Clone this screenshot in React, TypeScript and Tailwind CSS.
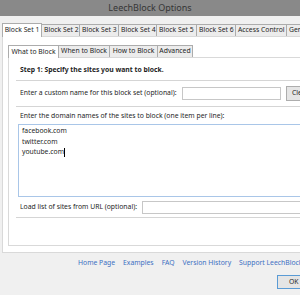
import React from "react";

const outerTabs: [string, string][] = [
  ["Block Set 1", "w-[40px]"],
  ["Block Set 2", "w-[38px]"],
  ["Block Set 3", "w-[39px]"],
  ["Block Set 4", "w-[38px]"],
  ["Block Set 5", "w-[40px]"],
  ["Block Set 6", "w-[39px]"],
  ["Access Control", "w-[51px]"],
  ["General", "w-[34px]"],
];
const innerTabs: [string, string][] = [
  ["What to Block", "w-[51px]"],
  ["When to Block", "w-[51px]"],
  ["How to Block", "w-[48px]"],
  ["Advanced", "w-[35px]"],
];

export default function App() {
  return (
    <div className="w-[300px] h-[295px] overflow-hidden bg-[#f0f0f0] font-['Noto_Sans',sans-serif] text-[6.8px] text-[#1e1e1e]">
      <div className="h-[16px] bg-[#898989] flex items-center justify-center text-[9px] text-[#363636]">
        LeechBlock Options
      </div>
      <div className="pl-[2px] pt-[6px] w-[380px]">
        <div className="flex items-end h-[14px]">
          {outerTabs.map(([t, w], i) =>
            i === 0 ? (
              <div key={t} className={`${w} h-[14px] bg-white border border-b-0 border-[#acacac] flex items-center justify-center leading-none whitespace-nowrap relative z-10 -mb-px`}>
                {t}
              </div>
            ) : (
              <div key={t} className={`${w} shrink-0 h-[12px] pl-[2px] bg-[#ececec] border border-l-0 border-b-0 border-[#acacac] flex items-center leading-none whitespace-nowrap`}>
                {t}
              </div>
            )
          )}
        </div>
        <div className="bg-white border border-[#d9d9d9] h-[217px] pl-[5px] pt-[7px]">
          <div className="flex items-end h-[13px]">
            {innerTabs.map(([t, w], i) =>
              i === 0 ? (
                <div key={t} className={`${w} h-[13px] bg-white border border-b-0 border-[#acacac] flex items-center justify-center leading-none whitespace-nowrap relative z-10 -mb-px`}>
                  {t}
                </div>
              ) : (
                <div key={t} className={`${w} h-[12px] bg-[#ececec] border border-l-0 border-b-0 border-[#acacac] flex items-center justify-center leading-none whitespace-nowrap`}>
                  {t}
                </div>
              )
            )}
          </div>
          <div className="bg-white border border-[#d9d9d9] h-[189px] pl-[7px] pt-[7px]">
            <div className="pl-[4px] h-[10px] leading-[10px] font-bold">Step 1: Specify the sites you want to block.</div>
            <div className="mt-[5px] h-px bg-[#d5d5d5]" />
            <div className="mt-[6px] h-[13px] flex items-center">
              <div className="w-[166px] pl-[4px] whitespace-nowrap">Enter a custom name for this block set (optional):</div>
              <div className="w-[99px] h-[13px] border border-[#c7c7c7] bg-white" />
              <div className="ml-[5px] h-[15px] px-[5px] border border-[#adadad] bg-[#e5e5e5] flex items-center">Clear</div>
            </div>
            <div className="mt-[6px] h-px bg-[#d5d5d5]" />
            <div className="mt-[4px] pl-[4px] h-[10px] leading-[10px] whitespace-nowrap">
              Enter the domain names of the sites to block (one item per line):
            </div>
            <div className="mt-[3px] ml-[2px] h-[73px] border border-[#a9c6e8] pl-[3px] pt-[1px] leading-[10.5px]">
              <div>facebook.com</div>
              <div>twitter.com</div>
              <div className="flex items-center">
                youtube.com<span className="inline-block w-px h-[9px] bg-black" />
              </div>
            </div>
            <div className="mt-[4px] h-[13px] flex items-center">
              <div className="w-[126px] pl-[4px] whitespace-nowrap">Load list of sites from URL (optional):</div>
              <div className="w-[220px] h-[13px] border border-[#c7c7c7] bg-white" />
            </div>
            <div className="mt-[3px] h-px bg-[#d5d5d5]" />
          </div>
        </div>
      </div>
      <div className="flex gap-[8px] pl-[78px] mt-[3px] h-[14px] items-center text-[#3b6fc2] whitespace-nowrap">
        <span>Home Page</span>
        <span>Examples</span>
        <span>FAQ</span>
        <span>Version History</span>
        <span>Support LeechBlock</span>
      </div>
      <div className="pl-[277px] mt-[5px] w-[380px]">
        <div className="w-[44px] h-[14px] border border-[#5a9bd5] bg-[#e5e5e5] flex items-center pl-[11px]">OK</div>
      </div>
    </div>
  );
}
